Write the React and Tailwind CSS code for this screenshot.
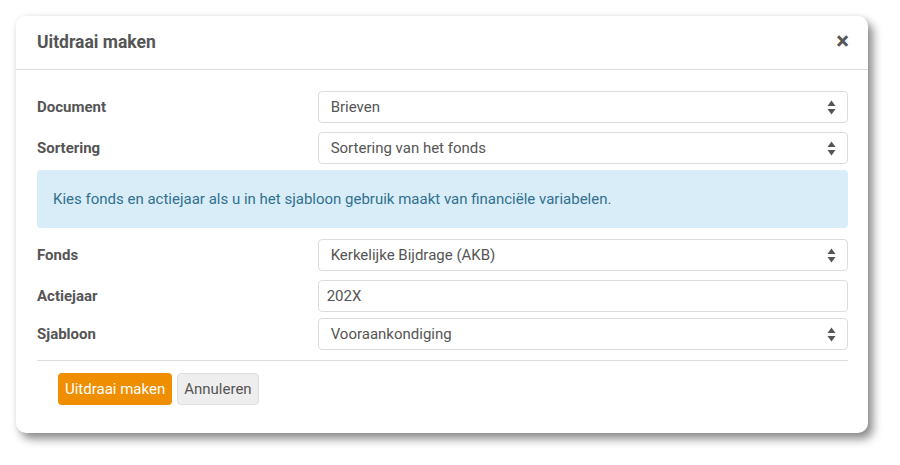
import React from "react";

const font = { fontFamily: "Roboto, 'Liberation Sans', sans-serif" };

function Arrows() {
  return (
    <svg width="9" height="15" viewBox="0 0 9 15" className="shrink-0">
      <path d="M4.5 0.5 L8.5 6 L0.5 6 Z" fill="#555" />
      <path d="M4.5 14.5 L8.5 9 L0.5 9 Z" fill="#555" />
    </svg>
  );
}

function Select({ value }) {
  return (
    <div className="w-[531px] h-[32px] border border-[#dcdcdc] rounded-[4px] bg-white flex items-center justify-between pl-[12px] pr-[11px] text-[15px] text-[#555]">
      <span>{value}</span>
      <Arrows />
    </div>
  );
}

function Row({ label, children, className = "" }) {
  return (
    <div className={"flex items-center " + className}>
      <div className="w-[281px] text-[15px] font-bold text-[#555]">{label}</div>
      {children}
    </div>
  );
}

export default function App() {
  return (
    <div className="w-[900px] h-[465px] bg-white pt-[16px] pl-[16px]" style={font}>
      <div className="w-[852px] h-[417px] bg-white rounded-[10px] shadow-[5px_6px_10px_rgba(0,0,0,0.45),0_0_6px_rgba(0,0,0,0.06)] flex flex-col">
        <div className="h-[54px] border-b border-[#dddddd] flex items-center justify-between pl-[21px] pr-[19px]">
          <div className="text-[17.5px] font-bold text-[#555]">Uitdraai maken</div>
          <div className="text-[24px] font-bold text-[#555] leading-none -mt-[3px]">×</div>
        </div>
        <div className="pl-[21px] pr-[20px] pt-[21px]">
          <Row label="Document"><Select value="Brieven" /></Row>
          <Row label="Sortering" className="mt-[9px]"><Select value="Sortering van het fonds" /></Row>
          <div className="mt-[6px] h-[58px] rounded-[4px] bg-[#d9edf8] flex items-center pl-[16px] text-[15px] text-[#31708f]">
            Kies fonds en actiejaar als u in het sjabloon gebruik maakt van financiële variabelen.
          </div>
          <Row label="Fonds" className="mt-[11px]"><Select value="Kerkelijke Bijdrage (AKB)" /></Row>
          <Row label="Actiejaar" className="mt-[9px]">
            <div className="w-[531px] h-[32px] border border-[#dcdcdc] rounded-[4px] bg-white flex items-center pl-[8px] text-[15px] text-[#555]">
              202X
            </div>
          </Row>
          <Row label="Sjabloon" className="mt-[6px]"><Select value="Vooraankondiging" /></Row>
          <div className="mt-[10px] border-t border-[#dddddd]" />
          <div className="mt-[12px] pl-[21px] flex gap-[5px]">
            <div className="h-[32px] px-[7px] rounded-[4px] bg-[#ee8e00] text-white text-[15px] flex items-center">
              Uitdraai maken
            </div>
            <div className="h-[32px] px-[6px] rounded-[4px] bg-[#eeeeee] border border-[#dddddd] text-[#555] text-[15px] flex items-center">
              Annuleren
            </div>
          </div>
        </div>
      </div>
    </div>
  );
}
